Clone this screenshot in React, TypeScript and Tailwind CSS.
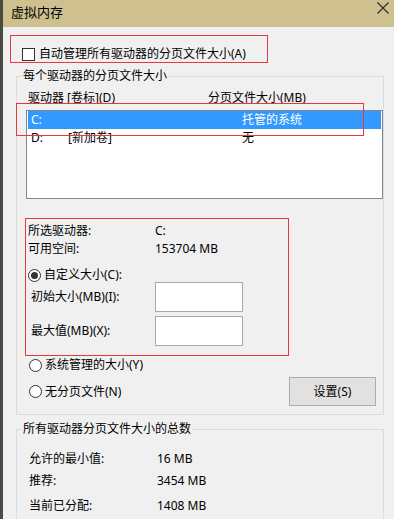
import React from 'react'

const font = {
  fontFamily:
    '"Noto Sans", "Noto Sans CJK SC", sans-serif'
}

const Radio = ({ checked }: { checked?: boolean }) => (
  <span className="w-[13px] h-[13px] rounded-full border border-[#333333] bg-white flex items-center justify-center shrink-0">
    {checked ? (
      <span className="w-[7px] h-[7px] rounded-full bg-[#333333]" />
    ) : null}
  </span>
)

const SizeInput = () => (
  <div className="w-[88px] h-[30px] border border-[#a9a9a9] bg-white" />
)

export default function App() {
  return (
    <div
      style={font}
      className="w-[394px] h-[519px] overflow-hidden flex text-[12px] text-black"
    >
      <div className="w-[3px] shrink-0 bg-[#4b4a42]" />

      <div className="relative flex-1 flex flex-col bg-[#f0f0f0]">
        {/* title bar */}
        <div className="h-[27px] shrink-0 bg-[#cfc090] flex items-start justify-between">
          <span className="pl-[8px] pt-[4px] leading-[16px] text-[13px]">
            虚拟内存
          </span>
          <svg
            width="12"
            height="12"
            viewBox="0 0 12 12"
            className="mt-[2px] mr-[5px]"
          >
            <path
              d="M0.5 0.5 L11.5 11.5 M11.5 0.5 L0.5 11.5"
              stroke="#2a2a2a"
              strokeWidth="1.1"
              fill="none"
            />
          </svg>
        </div>

        {/* auto manage */}
        <div className="mt-[8px] ml-[7px] w-[258px] h-[30px] border border-[#e8393a] pl-[11px] pt-[10px]">
          <div className="flex items-center gap-[4px] leading-[16px]">
            <span className="w-[13px] h-[13px] border border-[#333333] bg-white shrink-0" />
            <span>自动管理所有驱动器的分页文件大小(A)</span>
          </div>
        </div>

        {/* per drive */}
        <fieldset className="mt-[5px] ml-[13px] w-[368px] border border-[#dcdcdc] pb-[8px] shrink-0">
          <legend className="ml-[5px] px-[1px] leading-[16px]">
            每个驱动器的分页文件大小
          </legend>

          <div className="mt-[6px]">
            <div className="flex pl-[11px] leading-[16px]">
              <span className="w-[180px]">驱动器 [卷标](D)</span>
              <span>分页文件大小(MB)</span>
            </div>

            <div className="mt-[4px] ml-[9px] w-[357px] h-[89px] border border-[#828790] bg-white px-[1px]">
              <div className="h-[18px] flex items-center pl-[3px] bg-[#3399ff] text-white">
                <span className="w-[37px]">C:</span>
                <span className="w-[174px]" />
                <span>托管的系统</span>
              </div>
              <div className="h-[18px] flex items-center pl-[3px]">
                <span className="w-[37px]">D:</span>
                <span className="w-[174px]">[新加卷]</span>
                <span>无</span>
              </div>
            </div>
          </div>

          <div className="mt-[19px] ml-[8px] w-[264px] h-[138px] border border-[#e8393a] pl-[2px] pt-[3px]">
            <div className="flex leading-[18px]">
              <span className="w-[127px]">所选驱动器:</span>
              <span>C:</span>
            </div>
            <div className="flex leading-[18px]">
              <span className="w-[127px]">可用空间:</span>
              <span>153704 MB</span>
            </div>

            <div className="mt-[10px] flex items-center gap-[3px] leading-[14px]">
              <Radio checked />
              <span>自定义大小(C):</span>
            </div>

            <div className="flex items-center pl-[3px]">
              <span className="w-[124px]">初始大小(MB)(I):</span>
              <SizeInput />
            </div>
            <div className="mt-[4px] flex items-center pl-[3px]">
              <span className="w-[124px]">最大值(MB)(X):</span>
              <SizeInput />
            </div>
          </div>

          <div className="mt-[2px] ml-[12px] flex items-center gap-[3px] leading-[14px]">
            <Radio />
            <span>系统管理的大小(Y)</span>
          </div>

          <div className="mt-[5px] flex items-center">
            <div className="ml-[12px] flex items-center gap-[3px] leading-[14px]">
              <Radio />
              <span>无分页文件(N)</span>
            </div>
            <button className="ml-auto mr-[7px] w-[87px] h-[29px] border border-[#adadad] bg-[#e1e1e1] flex items-center justify-center">
              设置(S)
            </button>
          </div>
        </fieldset>

        {/* totals */}
        <fieldset className="mt-[6px] ml-[13px] w-[368px] border border-[#dcdcdc] pb-[20px] shrink-0">
          <legend className="ml-[5px] px-[1px] leading-[16px]">
            所有驱动器分页文件大小的总数
          </legend>

          <div className="mt-[13px] pl-[12px] flex leading-[18px]">
            <span className="w-[128px]">允许的最小值:</span>
            <span>16 MB</span>
          </div>
          <div className="mt-[4px] pl-[12px] flex leading-[18px]">
            <span className="w-[128px]">推荐:</span>
            <span>3454 MB</span>
          </div>
          <div className="mt-[7px] pl-[12px] flex leading-[18px]">
            <span className="w-[128px]">当前已分配:</span>
            <span>1408 MB</span>
          </div>
        </fieldset>

        {/* annotation over header and first row */}
        <div className="absolute z-10 left-[13px] top-[103px] w-[348px] h-[33px] border border-[#e8393a]" />
      </div>
    </div>
  )
}
